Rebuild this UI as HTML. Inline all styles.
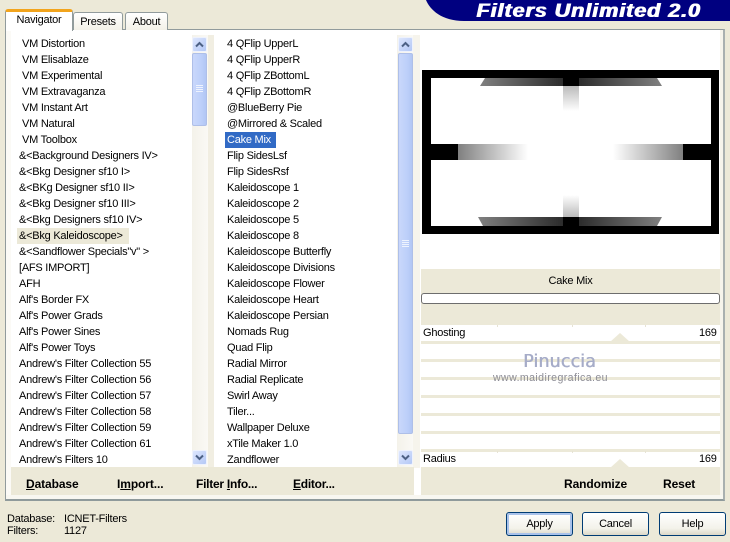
<!DOCTYPE html>
<html><head><meta charset="utf-8"><style>
html,body{margin:0;padding:0;background:#ece9d8}
#r{position:relative;width:730px;height:542px;overflow:hidden;background:#ece9d8;font-family:"Liberation Sans",sans-serif;font-size:11px;letter-spacing:-.24px;color:#000}
#r div{position:absolute;box-sizing:border-box}
.t{white-space:pre;height:18px;line-height:18px}
.b{font-weight:bold;font-size:12px;letter-spacing:-.1px;white-space:pre}
.sep{left:421px;width:299px;height:3px;background:#ece9d8}
.btn{width:67px;height:24px;border:1px solid #003c74;border-radius:3px;background:linear-gradient(#fff,#f3f2ea 70%,#dcd8c8);text-align:center;line-height:22px;font-size:11px}
.sb{width:15px;height:15px;background:linear-gradient(135deg,#dde6fd,#b4c8f6);border:1px solid #eef2fd;border-radius:2px}
.th{width:15px;background:linear-gradient(90deg,#c9d7fb,#bdd0fa 60%,#b2c6f4);border:1px solid #aebfe8;border-radius:2px}
.g{width:7px;height:1px;background:#eef3fe}
.k{width:1px;height:2px;background:#e6e3d4}
</style></head><body><div id="r">

<!-- banner -->
<svg style="position:absolute;left:420px;top:0" width="310" height="22"><path d="M6 0 C10 10 22 21 44 21 L310 21 L310 0Z" fill="#000080"/></svg>
<div style="left:476px;top:-1px;height:24px;line-height:24px;color:#fff;font-weight:bold;font-style:italic;font-size:19.5px;letter-spacing:.85px;white-space:pre;text-shadow:1px 0 0 #fff;transform:scaleX(1.105);transform-origin:0 0">Filters Unlimited 2.0</div>

<!-- panel -->
<div style="left:5px;top:29px;width:720px;height:472px;background:#fff;border:1px solid #919b9c;border-bottom:2px solid #8f9a9b;border-right:2px solid #a9b0b0"></div>
<div style="left:6px;top:30px;width:5px;height:466px;background:#fbfaf6"></div>
<div style="left:720px;top:30px;width:3px;height:469px;background:#f6f4ec"></div>
<div style="left:6px;top:495px;width:717px;height:4px;background:#f8f7f1"></div>

<!-- tabs -->
<div style="left:73px;top:12px;width:50px;height:18px;background:linear-gradient(#fff,#f3f1e8);border:1px solid #919b9c;border-bottom:0;border-radius:3px 3px 0 0;text-align:center;line-height:18px">Presets</div>
<div style="left:125px;top:12px;width:43px;height:18px;background:linear-gradient(#fff,#f3f1e8);border:1px solid #919b9c;border-bottom:0;border-radius:3px 3px 0 0;text-align:center;line-height:18px">About</div>
<div style="left:5px;top:9px;width:68px;height:22px;background:#fff;border:1px solid #919b9c;border-top:3px solid #f2a41c;border-bottom:0;border-radius:3px 3px 0 0;text-align:center;line-height:16px">Navigator</div>

<!-- left scrollbar -->
<div style="left:192px;top:35px;width:16px;height:432px;background:linear-gradient(90deg,#f4f2ea,#faf9f5)"></div>
<div style="left:208px;top:35px;width:6px;height:433px;background:#f1eee2"></div>
<div class="sb" style="left:192px;top:37px"></div>
<svg style="position:absolute;left:195px;top:41px" width="10" height="7"><path d="M1 5.5 L4.5 2 L8 5.5" fill="none" stroke="#4d6185" stroke-width="2"/></svg>
<div class="th" style="left:192px;top:53px;height:73px"></div>
<div class="g" style="left:196px;top:85px"></div><div class="g" style="left:196px;top:87px"></div><div class="g" style="left:196px;top:89px"></div><div class="g" style="left:196px;top:91px"></div>
<div class="sb" style="left:192px;top:450px"></div>
<svg style="position:absolute;left:195px;top:454px" width="10" height="7"><path d="M1 1.5 L4.5 5 L8 1.5" fill="none" stroke="#4d6185" stroke-width="2"/></svg>

<!-- right scrollbar -->
<div style="left:397px;top:35px;width:16px;height:432px;background:linear-gradient(90deg,#f4f2ea,#faf9f5)"></div>
<div style="left:413px;top:35px;width:7px;height:433px;background:#f6f4ec"></div>
<div class="sb" style="left:398px;top:37px"></div>
<svg style="position:absolute;left:401px;top:41px" width="10" height="7"><path d="M1 5.5 L4.5 2 L8 5.5" fill="none" stroke="#4d6185" stroke-width="2"/></svg>
<div class="th" style="left:398px;top:53px;height:381px"></div>
<div class="g" style="left:402px;top:240px"></div><div class="g" style="left:402px;top:242px"></div><div class="g" style="left:402px;top:244px"></div><div class="g" style="left:402px;top:246px"></div>
<div class="sb" style="left:398px;top:450px"></div>
<svg style="position:absolute;left:401px;top:454px" width="10" height="7"><path d="M1 1.5 L4.5 5 L8 1.5" fill="none" stroke="#4d6185" stroke-width="2"/></svg>

<!-- list 1 -->
<div style="left:17px;top:228px;width:112px;height:16px;background:#ece9d8"></div>
<div class="t" style="left:22px;top:35px">VM Distortion</div>
<div class="t" style="left:22px;top:51px">VM Elisablaze</div>
<div class="t" style="left:22px;top:67px">VM Experimental</div>
<div class="t" style="left:22px;top:83px">VM Extravaganza</div>
<div class="t" style="left:22px;top:99px">VM Instant Art</div>
<div class="t" style="left:22px;top:115px">VM Natural</div>
<div class="t" style="left:22px;top:131px">VM Toolbox</div>
<div class="t" style="left:19px;top:147px">&amp;&lt;Background Designers IV&gt;</div>
<div class="t" style="left:19px;top:163px">&amp;&lt;Bkg Designer sf10 I&gt;</div>
<div class="t" style="left:19px;top:179px">&amp;&lt;BKg Designer sf10 II&gt;</div>
<div class="t" style="left:19px;top:195px">&amp;&lt;Bkg Designer sf10 III&gt;</div>
<div class="t" style="left:19px;top:211px">&amp;&lt;Bkg Designers sf10 IV&gt;</div>
<div class="t" style="left:19px;top:227px">&amp;&lt;Bkg Kaleidoscope&gt;</div>
<div class="t" style="left:19px;top:243px">&amp;&lt;Sandflower Specials"v" &gt;</div>
<div class="t" style="left:19px;top:259px">[AFS IMPORT]</div>
<div class="t" style="left:19px;top:275px">AFH</div>
<div class="t" style="left:19px;top:291px">Alf's Border FX</div>
<div class="t" style="left:19px;top:307px">Alf's Power Grads</div>
<div class="t" style="left:19px;top:323px">Alf's Power Sines</div>
<div class="t" style="left:19px;top:339px">Alf's Power Toys</div>
<div class="t" style="left:19px;top:355px">Andrew's Filter Collection 55</div>
<div class="t" style="left:19px;top:371px">Andrew's Filter Collection 56</div>
<div class="t" style="left:19px;top:387px">Andrew's Filter Collection 57</div>
<div class="t" style="left:19px;top:403px">Andrew's Filter Collection 58</div>
<div class="t" style="left:19px;top:419px">Andrew's Filter Collection 59</div>
<div class="t" style="left:19px;top:435px">Andrew's Filter Collection 61</div>
<div class="t" style="left:19px;top:451px">Andrew's Filters 10</div>

<!-- list 2 -->
<div style="left:225px;top:132px;width:51px;height:16px;background:#316ac5"></div>
<div class="t" style="left:227px;top:35px">4 QFlip UpperL</div>
<div class="t" style="left:227px;top:51px">4 QFlip UpperR</div>
<div class="t" style="left:227px;top:67px">4 QFlip ZBottomL</div>
<div class="t" style="left:227px;top:83px">4 QFlip ZBottomR</div>
<div class="t" style="left:227px;top:99px">@BlueBerry Pie</div>
<div class="t" style="left:227px;top:115px">@Mirrored &amp; Scaled</div>
<div class="t" style="left:227px;top:131px;color:#fff">Cake Mix</div>
<div class="t" style="left:227px;top:147px">Flip SidesLsf</div>
<div class="t" style="left:227px;top:163px">Flip SidesRsf</div>
<div class="t" style="left:227px;top:179px">Kaleidoscope 1</div>
<div class="t" style="left:227px;top:195px">Kaleidoscope 2</div>
<div class="t" style="left:227px;top:211px">Kaleidoscope 5</div>
<div class="t" style="left:227px;top:227px">Kaleidoscope 8</div>
<div class="t" style="left:227px;top:243px">Kaleidoscope Butterfly</div>
<div class="t" style="left:227px;top:259px">Kaleidoscope Divisions</div>
<div class="t" style="left:227px;top:275px">Kaleidoscope Flower</div>
<div class="t" style="left:227px;top:291px">Kaleidoscope Heart</div>
<div class="t" style="left:227px;top:307px">Kaleidoscope Persian</div>
<div class="t" style="left:227px;top:323px">Nomads Rug</div>
<div class="t" style="left:227px;top:339px">Quad Flip</div>
<div class="t" style="left:227px;top:355px">Radial Mirror</div>
<div class="t" style="left:227px;top:371px">Radial Replicate</div>
<div class="t" style="left:227px;top:387px">Swirl Away</div>
<div class="t" style="left:227px;top:403px">Tiler...</div>
<div class="t" style="left:227px;top:419px">Wallpaper Deluxe</div>
<div class="t" style="left:227px;top:435px">xTile Maker 1.0</div>
<div class="t" style="left:227px;top:451px">Zandflower</div>

<!-- preview -->
<svg style="position:absolute;left:422px;top:70px" width="297" height="164" viewBox="422 70 297 164">
<defs>
<linearGradient id="a" x1="0" x2="1"><stop offset="0" stop-color="#808080"/><stop offset="1" stop-color="#fff"/></linearGradient>
<linearGradient id="b" x1="0" x2="1"><stop offset="0" stop-color="#fff"/><stop offset="1" stop-color="#808080"/></linearGradient>
<linearGradient id="c" x1="0" x2="1"><stop offset="0" stop-color="#808080"/><stop offset="1" stop-color="#2c2c2c"/></linearGradient>
<linearGradient id="d" x1="0" x2="1"><stop offset="0" stop-color="#2c2c2c"/><stop offset="1" stop-color="#808080"/></linearGradient>
<linearGradient id="e" x1="0" x2="0" y1="0" y2="1"><stop offset="0" stop-color="#bbb"/><stop offset="1" stop-color="#fff"/></linearGradient>
<linearGradient id="f" x1="0" x2="0" y1="0" y2="1"><stop offset="0" stop-color="#fff"/><stop offset="1" stop-color="#bbb"/></linearGradient>
</defs>
<rect x="422" y="70" width="297" height="164" fill="#000"/>
<rect x="431" y="78" width="280" height="148" fill="#fff"/>
<rect x="431" y="144" width="280" height="16" fill="#000"/>
<rect x="458" y="144" width="70" height="16" fill="url(#a)"/>
<rect x="528" y="144" width="85" height="16" fill="#fff"/>
<rect x="613" y="144" width="70" height="16" fill="url(#b)"/>
<path d="M485 78 L563 78 L563 86 L480 86Z" fill="url(#c)"/>
<path d="M579 78 L657 78 L662 86 L579 86Z" fill="url(#d)"/>
<rect x="563" y="78" width="16" height="8" fill="#000"/>
<rect x="563" y="86" width="16" height="25" fill="url(#e)"/>
<path d="M478 217 L563 217 L563 226 L483 226Z" fill="url(#c)"/>
<path d="M579 217 L662 217 L657 226 L579 226Z" fill="url(#d)"/>
<rect x="563" y="217" width="16" height="9" fill="#000"/>
<rect x="563" y="195" width="16" height="22" fill="url(#f)"/>
</svg>

<!-- name block -->
<div style="left:421px;top:269px;width:299px;height:56px;background:#ece9d8"></div>
<div class="t" style="left:421px;top:272px;width:299px;text-align:center">Cake Mix</div>
<div style="left:421px;top:293px;width:299px;height:11px;background:#fff;border:1px solid #6d6d6d;border-radius:3px"></div>

<!-- sliders -->
<div class="sep" style="top:341px"></div>
<div class="sep" style="top:359px"></div>
<div class="sep" style="top:377px"></div>
<div class="sep" style="top:395px"></div>
<div class="sep" style="top:413px"></div>
<div class="sep" style="top:431px"></div>
<div class="sep" style="top:449px"></div>
<div class="k" style="left:497px;top:325px"></div><div class="k" style="left:572px;top:325px"></div><div class="k" style="left:645px;top:325px"></div>
<div class="k" style="left:497px;top:451px"></div><div class="k" style="left:572px;top:451px"></div><div class="k" style="left:645px;top:451px"></div>
<svg style="position:absolute;left:610px;top:332px" width="20" height="10"><path d="M0 10 L10 1 L20 10Z" fill="#ece9d8"/></svg>
<svg style="position:absolute;left:610px;top:458px" width="20" height="10"><path d="M0 10 L10 1 L20 10Z" fill="#ece9d8"/></svg>
<div class="t" style="left:423px;top:324px">Ghosting</div>
<div class="t" style="left:699px;top:324px">169</div>
<div class="t" style="left:423px;top:450px">Radius</div>
<div class="t" style="left:699px;top:450px">169</div>

<!-- watermark -->
<div style="left:523px;top:351px;color:#a6acc8;font-size:17.5px;letter-spacing:.1px;line-height:22px;white-space:pre;font-family:'DejaVu Sans',sans-serif;text-shadow:.5px 0 0 #a6acc8">Pinuccia</div>
<div style="left:493px;top:371px;color:#8d8d96;font-size:10.6px;letter-spacing:.4px;line-height:14px;white-space:pre">www.maidiregrafica.eu</div>

<!-- bottom bars -->
<div style="left:11px;top:467px;width:403px;height:28px;background:#ece9d8"></div>
<div style="left:421px;top:467px;width:299px;height:28px;background:#ece9d8"></div>
<div class="b" style="left:26px;top:477px"><u>D</u>atabase</div>
<div class="b" style="left:117px;top:477px">I<u>m</u>port...</div>
<div class="b" style="left:196px;top:477px;letter-spacing:-.25px">Filter <u>I</u>nfo...</div>
<div class="b" style="left:293px;top:477px;letter-spacing:-.25px"><u>E</u>ditor...</div>
<div class="b" style="left:564px;top:477px">Randomize</div>
<div class="b" style="left:663px;top:477px">Reset</div>

<!-- status -->
<div class="t" style="left:7px;top:510px">Database:</div>
<div class="t" style="left:64px;top:510px">ICNET-Filters</div>
<div class="t" style="left:7px;top:522px">Filters:</div>
<div class="t" style="left:64px;top:522px">1127</div>

<!-- buttons -->
<div class="btn" style="left:506px;top:512px;box-shadow:inset 0 0 0 2px #a9c2ea">Apply</div>
<div class="btn" style="left:582px;top:512px">Cancel</div>
<div class="btn" style="left:659px;top:512px">Help</div>

</div></body></html>
